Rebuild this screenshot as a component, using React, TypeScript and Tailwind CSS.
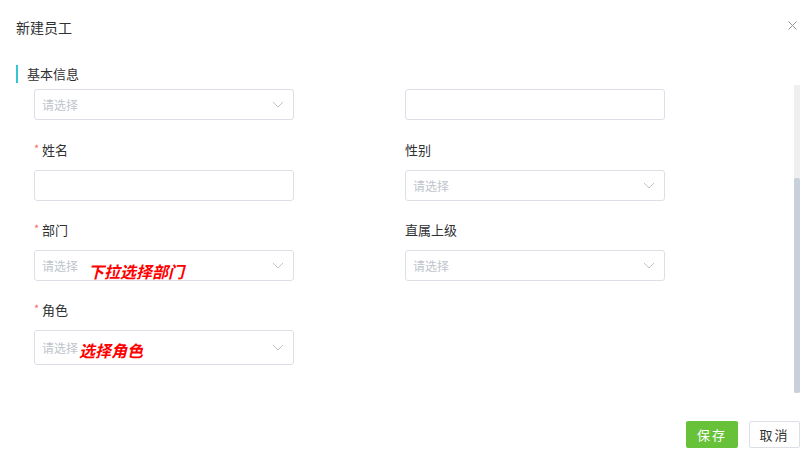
import React from 'react';

const font = { fontFamily: '"Noto Sans CJK SC", "Noto Sans", sans-serif' };

function Chevron() {
    return (
        <svg width="12" height="7" viewBox="0 0 12 7" fill="none" className="shrink-0">
            <polyline points="1,1 6,6 11,1" stroke="#c0c4cc" strokeWidth="1" />
        </svg>
    );
}

function Label({ text, required }: { text: string; required?: boolean }) {
    return (
        <div className="h-[20px] mb-[10px] flex items-center text-[13px] leading-[20px] text-[#303133]">
            {required ? <span className="text-[#f56c6c] text-[11px] mr-[3px] -mt-[4px] w-[5px]">*</span> : null}
            <span>{text}</span>
        </div>
    );
}

function Select({ note, noteGap, tall }: { note?: string; noteGap?: boolean; tall?: boolean }) {
    return (
        <div className={`${tall ? 'h-[35px]' : 'h-[31px]'} w-[260px] border border-[#dcdfe6] rounded-[3px] flex items-center pl-[7px] pr-[9px]`}>
            <span className="text-[12px] leading-[16px] text-[#c0c4cc]">请选择</span>
            {note ? (
                <span className={`${noteGap ? 'ml-[10px] mt-[10px]' : 'ml-[1px] mt-[5px]'} text-[16px] leading-[20px] font-bold italic text-[#ff0000]`}>{note}</span>
            ) : null}
            <div className="flex-1" />
            <Chevron />
        </div>
    );
}

function Input() {
    return <div className="h-[31px] w-[260px] border border-[#dcdfe6] rounded-[3px]" />;
}

export default function App() {
    return (
        <div className="w-[812px] h-[464px] bg-white flex flex-col" style={font}>
            {/* header */}
            <div className="h-[54px] flex items-start justify-between pl-4 pr-[15px] shrink-0">
                <div className="mt-[17px] text-[14px] leading-[20px] text-[#303133]">新建员工</div>
                <svg width="9" height="9" viewBox="0 0 9 9" className="mt-[21px]">
                    <path d="M0.5 0.5 L8.5 8.5 M8.5 0.5 L0.5 8.5" stroke="#909399" strokeWidth="1" />
                </svg>
            </div>

            {/* section title */}
            <div className="h-[18px] mt-[11px] pl-4 flex items-center gap-[9px] shrink-0">
                <div className="w-[2px] h-[18px] bg-[#36c6d3]" />
                <span className="text-[13px] leading-[18px] text-[#303133]">基本信息</span>
            </div>

            {/* scroll area */}
            <div className="mt-[2px] h-[308px] flex shrink-0">
                <div className="flex-1 overflow-hidden pt-[4px] pl-[34px]">
                    <div className="grid grid-cols-[260px_260px] gap-x-[111px]">
                        <div className="flex flex-col">
                            <Select />
                            <div className="mt-[20px]" />
                            <Label text="姓名" required />
                            <Input />
                            <div className="mt-[19px]" />
                            <Label text="部门" required />
                            <Select note="下拉选择部门" noteGap />
                            <div className="mt-[19px]" />
                            <Label text="角色" required />
                            <Select note="选择角色" tall />
                        </div>
                        <div className="flex flex-col">
                            <Input />
                            <div className="mt-[20px]" />
                            <Label text="性别" />
                            <Select />
                            <div className="mt-[19px]" />
                            <Label text="直属上级" />
                            <Select />
                        </div>
                    </div>
                </div>
                <div className="w-[6px] mr-[12px] flex flex-col bg-[#efefef] rounded-[1px]">
                    <div className="h-[93px]" />
                    <div className="flex-1 bg-[#c8d1da] rounded-[2px]" />
                </div>
            </div>

            {/* footer */}
            <div className="flex-1 flex items-start justify-end pr-3 pt-[28px] gap-[11px]">
                <button className="w-[52px] h-[27px] bg-[#67c23a] rounded-[2px] text-white text-[13px] leading-[27px] tracking-[2px]">保存</button>
                <button className="w-[51px] h-[27px] bg-white border border-[#dcdfe6] rounded-[2px] text-[#303133] text-[13px] leading-[25px] tracking-[2px]">取消</button>
            </div>
        </div>
    );
}
